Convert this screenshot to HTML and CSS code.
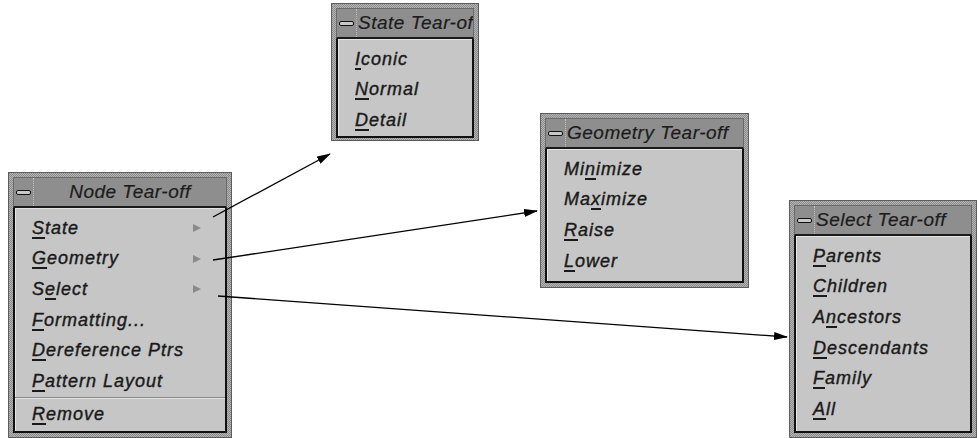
FILE: index.html
```html
<!DOCTYPE html>
<html lang="en">
<head>
    <meta charset="UTF-8">
    <title>Tear-off Menus</title>
    <link rel="stylesheet" href="styles.css">
</head>
<body>
    <div class="desk">
        <!-- Node Tear-off -->
        <div class="tearoff node">
            <div class="titlebar">
                <span class="winbtn"><i></i></span>
                <span class="title">Node Tear-off</span>
            </div>
            <ul class="menu">
                <li><span><u>S</u>tate</span><b class="cascade"></b></li>
                <li><span><u>G</u>eometry</span><b class="cascade"></b></li>
                <li><span>S<u>e</u>lect</span><b class="cascade"></b></li>
                <li><span><u>F</u>ormatting...</span></li>
                <li><span><u>D</u>ereference Ptrs</span></li>
                <li><span><u>P</u>attern Layout</span></li>
                <li class="sep"></li>
                <li><span><u>R</u>emove</span></li>
            </ul>
        </div>

        <!-- State Tear-off -->
        <div class="tearoff state">
            <div class="titlebar">
                <span class="winbtn"><i></i></span>
                <span class="title">State Tear-off</span>
            </div>
            <ul class="menu">
                <li><span><u>I</u>conic</span></li>
                <li><span><u>N</u>ormal</span></li>
                <li><span><u>D</u>etail</span></li>
            </ul>
        </div>

        <!-- Geometry Tear-off -->
        <div class="tearoff geometry">
            <div class="titlebar">
                <span class="winbtn"><i></i></span>
                <span class="title">Geometry Tear-off</span>
            </div>
            <ul class="menu">
                <li><span>Mi<u>n</u>imize</span></li>
                <li><span>Ma<u>x</u>imize</span></li>
                <li><span><u>R</u>aise</span></li>
                <li><span><u>L</u>ower</span></li>
            </ul>
        </div>

        <!-- Select Tear-off -->
        <div class="tearoff select">
            <div class="titlebar">
                <span class="winbtn"><i></i></span>
                <span class="title">Select Tear-off</span>
            </div>
            <ul class="menu">
                <li><span><u>P</u>arents</span></li>
                <li><span><u>C</u>hildren</span></li>
                <li><span>A<u>n</u>cestors</span></li>
                <li><span><u>D</u>escendants</span></li>
                <li><span><u>F</u>amily</span></li>
                <li><span><u>A</u>ll</span></li>
            </ul>
        </div>

        <!-- arrows from cascade items to their tear-offs -->
        <svg class="arrows" width="979" height="438" viewBox="0 0 979 438">
            <defs>
                <marker id="head" markerWidth="14" markerHeight="8" refX="13" refY="4" orient="auto" markerUnits="userSpaceOnUse">
                    <path d="M0,0 L14,4 L0,8 Z" fill="#000"/>
                </marker>
            </defs>
            <line x1="213" y1="217" x2="330" y2="154" stroke="#000" stroke-width="1.3" marker-end="url(#head)"/>
            <line x1="213" y1="260" x2="537" y2="211" stroke="#000" stroke-width="1.3" marker-end="url(#head)"/>
            <line x1="218" y1="296" x2="787" y2="337" stroke="#000" stroke-width="1.3" marker-end="url(#head)"/>
        </svg>
    </div>
</body>
</html>
```

FILE: styles.css
```css
body {
    margin: 0;
    padding: 0;
    background-color: #ffffff;
    font-family: 'Liberation Sans', Arial, sans-serif;
}

.desk {
    position: relative;
    width: 979px;
    height: 438px;
    overflow: hidden;
}

/* window frame, stippled grey */
.tearoff {
    position: absolute;
    box-sizing: border-box;
    display: flex;
    flex-direction: column;
    border: 1px solid #5c5c5c;
    padding: 4px;
    background: repeating-conic-gradient(#b4b4b4 0 25%, #8c8c8c 0 50%) 0 0 / 2px 2px;
}

.node     { left: 8px;   top: 172px; width: 224px; height: 266px; }
.state    { left: 331px; top: 3px;   width: 148px; height: 138px; }
.geometry { left: 540px; top: 113px; width: 209px; height: 175px; }
.select   { left: 789px; top: 200px; width: 188px; height: 238px; }

.titlebar {
    display: flex;
    align-items: stretch;
    height: 28px;
    flex-shrink: 0;
    background-color: #8e8e8e;
    border: 1px solid #6a6a6a;
    border-bottom: 2px solid #1a1a1a;
}

.winbtn {
    width: 19px;
    flex-shrink: 0;
    display: flex;
    align-items: center;
    justify-content: center;
    border-right: 1px dotted #c0c0c0;
}

.winbtn i {
    display: block;
    width: 13px;
    height: 3px;
    background-color: #c8c8c8;
    border: 1px solid #111;
    border-radius: 2px;
}

.title {
    flex: 1;
    display: flex;
    align-items: center;
    justify-content: center;
    font-style: italic;
    font-size: 19px;
    letter-spacing: 0.5px;
    -webkit-text-stroke: 0.2px #1c1c1c;
    color: #1c1c1c;
    white-space: nowrap;
    overflow: hidden;
}

.state .title,
.geometry .title,
.select .title {
    justify-content: flex-start;
    padding-left: 1px;
}

.menu {
    flex: 1;
    list-style: none;
    margin: 0;
    padding: 5px 0 0 0;
    background-color: #c6c6c6;
    border: 2px solid #111;
    border-top: none;
    box-shadow: inset 1px 1px 0 #e4e4e4;
}

.menu li {
    display: flex;
    align-items: center;
    justify-content: space-between;
    height: 30.6px;
    padding: 0 24px 0 17px;
    font-style: italic;
    font-size: 18px;
    letter-spacing: 1px;
    -webkit-text-stroke: 0.4px #1a1a1a;
    color: #1a1a1a;
    white-space: nowrap;
}

.menu li u {
    text-decoration-thickness: 2px;
    text-underline-offset: 3px;
}

.menu li.sep {
    height: 0;
    margin: 0 0 1px;
    padding: 0;
    border-top: 1px solid #8a8a8a;
    border-bottom: 1px solid #e2e2e2;
}

.cascade {
    width: 0;
    height: 0;
    border-left: 8px solid #8a8a8a;
    border-top: 4px solid transparent;
    border-bottom: 4px solid transparent;
}

.arrows {
    position: absolute;
    left: 0;
    top: 0;
    pointer-events: none;
}
```
